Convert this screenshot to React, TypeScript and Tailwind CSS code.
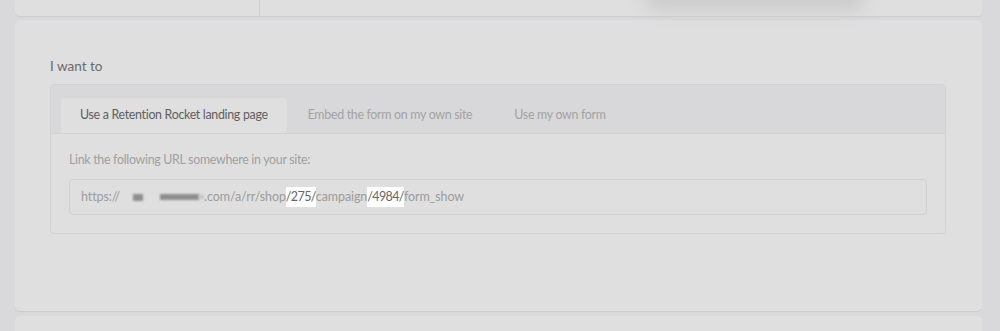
import React from "react";

const tabs = [
  "Use a Retention Rocket landing page",
  "Embed the form on my own site",
  "Use my own form",
];

export default function App() {
  return (
    <div
      className="h-[331px] bg-[#d9d9db] px-[15px] text-[12.4px] tracking-[-0.3px] text-[#6b6b6b] overflow-hidden"
      style={{ fontFamily: '"Source Sans Pro", Lato, "Open Sans", sans-serif' }}
    >
      {/* top card, only its bottom edge is visible */}
      <div className="relative flex h-[16px] w-[967px] rounded-b-[4px] bg-[#dfdfdf] shadow-[0_1px_1px_rgba(0,0,0,0.06)]">
        <div className="w-[245px] border-r border-[#cfcfd2]" />
        <div className="absolute left-[630px] top-[-14px] h-[24px] w-[220px] rounded-full bg-[#cbcbcd] blur-[8px]" />
      </div>

      <div className="mt-[4px] h-[291px] w-[967px] rounded-[5px] bg-[#dfdfdf] pl-[35px] pr-[36px] pt-[37px] shadow-[0_1px_1px_rgba(0,0,0,0.06)]">
        <div className="text-[13.5px] leading-[18px] tracking-normal text-[#6a6a6a]">I want to</div>

        <div className="mt-[9px] rounded-[4px] border border-[#d2d2d5]">
          <div className="flex h-[48px] items-end bg-[#d8d8da] pl-[10px]">
            {tabs.map((t, i) => (
              <div
                key={t}
                className={
                  i === 0
                    ? "flex h-[35px] items-center rounded-t-[4px] bg-[#dfdfdf] px-[19px] text-[#5e5e5e]"
                    : "flex h-[35px] items-center px-[21px] text-[#a3a3a3]"
                }
              >
                {t}
              </div>
            ))}
          </div>
          <div className="border-t border-[#d2d2d5] px-[18px] pb-[18px] pt-[18px]">
            <div className="leading-[16px] text-[#a0a0a0]">
              Link the following URL somewhere in your site:
            </div>
            <div className="mt-[11px] flex h-[36px] items-center rounded-[4px] border border-[#d0d0d3] px-[11px] text-[12.5px] tracking-[-0.1px] text-[#9c9c9c]">
              <span>https://</span>
              <span className="ml-[13px] h-[7px] w-[10px] bg-[#8e8e8e] blur-[1px]" />
              <span className="ml-[17px] h-[6px] w-[39px] bg-[#8e8e8e] blur-[1px]" />
              <span className="h-[4px] w-[5px] bg-[#c4c4c4] blur-[1px]" />
              <span>.com/a/rr/shop</span>
              <span className="bg-white leading-[20px] tracking-[-0.6px] text-[#666]">/275/</span>
              <span>campaign</span>
              <span className="bg-white leading-[20px] tracking-[-0.6px] text-[#666]">/4984/</span>
              <span>form_show</span>
            </div>
          </div>
        </div>
      </div>

      <div className="mt-[5px] h-[40px] w-[967px] rounded-[5px] bg-[#dfdfdf]" />
    </div>
  );
}
